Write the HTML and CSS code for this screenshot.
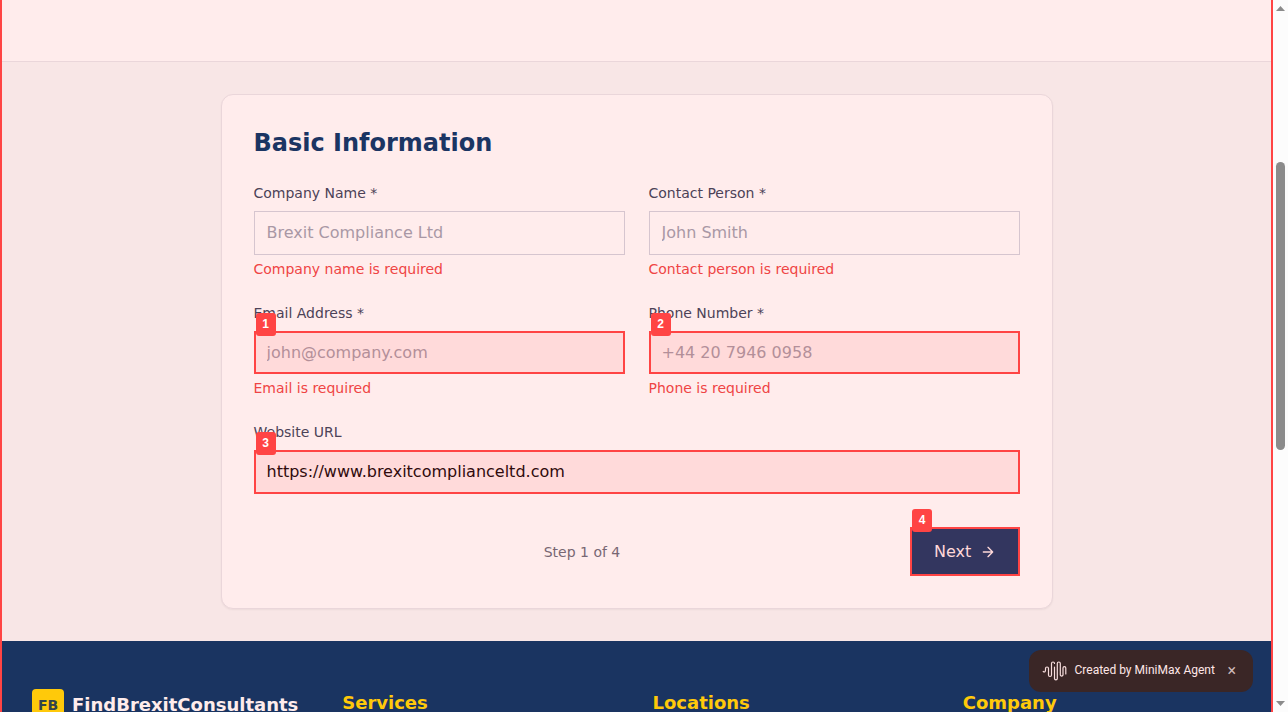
FILE: index.html
```html
<!DOCTYPE html>
<html lang="en">
<head>
<meta charset="utf-8">
<title>FindBrexitConsultants</title>
<link rel="stylesheet" href="styles.css">
</head>
<body>
<div class="window">
  <div class="page">
    <header class="top"></header>
    <main class="main">
      <section class="card">
        <h2 class="title">Basic Information</h2>
        <form class="form">
          <div class="field">
            <label class="label">Company Name *</label>
            <input class="input" placeholder="Brexit Compliance Ltd">
            <p class="error">Company name is required</p>
          </div>
          <div class="field">
            <label class="label">Contact Person *</label>
            <input class="input" placeholder="John Smith">
            <p class="error">Contact person is required</p>
          </div>
          <div class="field">
            <label class="label">Email Address *</label>
            <div class="marked"><input class="input hot" placeholder="john@company.com"><span class="badge">1</span></div>
            <p class="error">Email is required</p>
          </div>
          <div class="field">
            <label class="label">Phone Number *</label>
            <div class="marked"><input class="input hot" placeholder="+44 20 7946 0958"><span class="badge">2</span></div>
            <p class="error">Phone is required</p>
          </div>
          <div class="field wide">
            <label class="label">Website URL</label>
            <div class="marked"><input class="input hot" value="https://www.brexitcomplianceltd.com"><span class="badge">3</span></div>
          </div>
        </form>
        <div class="actions">
          <div></div>
          <span class="step">Step 1 of 4</span>
          <div class="marked">
            <button class="next">Next
              <svg class="arrow" viewBox="0 0 24 24"><path d="M5 12h14M12 5l7 7-7 7"/></svg>
            </button>
            <span class="badge">4</span>
          </div>
        </div>
      </section>
    </main>
    <footer class="footer">
      <div class="brand"><span class="logo">FB</span><span class="name">FindBrexitConsultants</span></div>
      <h3 class="heading">Services</h3>
      <h3 class="heading">Locations</h3>
      <h3 class="heading">Company</h3>
    </footer>
  </div>
  <div class="scrollbar">
    <svg class="tip" viewBox="0 0 9 5"><path d="M4.500 0L9 5H0z"/></svg>
    <div class="thumb"></div>
    <svg class="tip" viewBox="0 0 9 5"><path d="M0 0h9L4.500 5z"/></svg>
  </div>
</div>
<div class="agent">
  <svg class="wave" viewBox="0 0 24 20"><path d="M.7 10.500c1.500 1.200 2.300 0 2.300-1.500V7.500a1.500 1.500 0 0 1 3 0V14a1.500 1.500 0 0 0 3 0V2.500a1.500 1.500 0 0 1 3 0M12 6v11.500a1.400 1.400 0 0 0 2.800 0V2.500a1.500 1.500 0 0 1 3 0V14a1.400 1.400 0 0 0 2.700 0V7a1.400 1.400 0 0 1 2.800 0v6"/></svg>
  <span>Created by MiniMax Agent</span>
  <span class="close">×</span>
</div>
</body>
</html>
```
FILE: styles.css
```css
* { box-sizing: border-box; }
body { margin: 0; font-family: "DejaVu Sans", sans-serif; font-size: 16px; line-height: 24px; }
.window { display: flex; width: 1288px; height: 712px; overflow: hidden; }
.page { width: 1273px; height: 712px; overflow: hidden; border: solid #ff4444; border-width: 0 2px; background: #f8e6e6; }
.top { height: 62px; background: #ffecec; border-bottom: 1px solid #ead6da; }
.main { padding: 32px 0; }
.card { width: 832px; height: 514.5px; margin: 0 auto; padding: 32px; background: #ffecec; border: 1px solid #ead6da; border-radius: 12px; box-shadow: 0 1px 2px rgba(0,0,0,.05); }
.title { margin: 0 0 24px; font-size: 24px; line-height: 32px; font-weight: 700; color: #1b3563; }
.form { display: grid; grid-template-columns: 1fr 1fr; gap: 24px; }
.wide { grid-column: span 2; }
.label { display: block; margin-bottom: 8px; font-size: 14px; line-height: 20px; color: #4c4257; }
.input { display: block; width: 100%; height: 43.5px; padding: 0 12px; border: 1px solid #d6c5cf; border-radius: 0; background: transparent; font: 16px "DejaVu Sans", sans-serif; color: #300b0d; outline: none; }
.input::placeholder { color: #a998a5; opacity: 1; }
.hot { padding: 0 11px; border: 2px solid #ff4444; background: #ffdada; }
.hot::placeholder { color: #b38f99; }
.error { margin: 4px 0 0; font-size: 14px; line-height: 20px; color: #ef4444; }
.marked { position: relative; }
.badge { position: absolute; left: 2px; top: -18px; width: 20px; height: 23px; border-radius: 3px; background: #ff4444; color: #fff; font: 700 12px/23px "Liberation Sans", sans-serif; text-align: center; }
.actions { display: flex; justify-content: space-between; align-items: center; margin: 33.5px -0.5px 0 0.5px; }
.step { font-size: 14px; line-height: 20px; color: #786773; }
.next { display: flex; align-items: center; gap: 9px; width: 110px; height: 49px; padding: 0 22px; border: 2px solid #ff4444; background: #33365f; color: #ffd9d9; font: 16px "DejaVu Sans", sans-serif; }
.arrow { flex: none; width: 16px; height: 16px; fill: none; stroke: currentColor; stroke-width: 2; stroke-linecap: round; stroke-linejoin: round; }
.footer { display: grid; grid-template-columns: repeat(4, 1fr); gap: 32px; height: 240px; padding: 48px 30px; background: #1a3461; }
.brand { display: flex; align-items: center; gap: 8px; height: 32px; }
.logo { width: 32px; height: 32px; border-radius: 4px; background: #ffc90a; color: #33424b; font-size: 14px; line-height: 32px; font-weight: 700; text-align: center; }
.name { font-size: 18px; line-height: 28px; font-weight: 700; color: #ffecec; }
.heading { margin: 0; font-size: 18px; line-height: 28px; font-weight: 600; color: #ffc90a; }
.scrollbar { display: flex; flex-direction: column; align-items: center; width: 15px; padding: 6px 0; background: #fcfcfc; }
.tip { width: 9px; height: 5px; fill: #8b8b8b; }
.thumb { width: 9px; height: 288px; margin: 151px 0 auto; border-radius: 5px; background: #8b8b8b; }
.agent { position: fixed; left: 1029px; top: 650px; display: flex; align-items: center; width: 224px; height: 42px; padding: 0 13px 2px 12.5px; border-radius: 12px; background: #3a2626; color: #ffe6e6; font: 12px/20px Roboto, sans-serif; }
.wave { width: 25px; height: 20px; margin: 2px 8px 0 0; fill: none; stroke: #f8dede; stroke-width: 1.2; stroke-linecap: round; }
.close { margin-left: auto; margin-right: 4px; padding-top: 1px; font-size: 16px; color: #cdb9b9; }
```
